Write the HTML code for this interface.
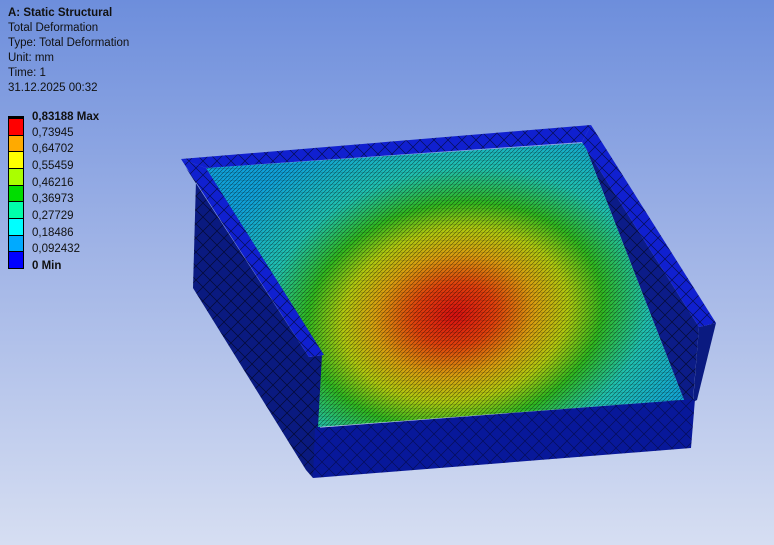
<!DOCTYPE html>
<html><head><meta charset="utf-8"><style>
html,body{margin:0;padding:0;width:774px;height:545px;overflow:hidden}
body{background:linear-gradient(180deg,#6d8edc 0%,#9fb3e6 45%,#d6def2 100%);font-family:"Liberation Sans",sans-serif;position:relative}
.t{position:absolute;left:8px;font-size:11.5px;color:#111;line-height:15px}
.leg{position:absolute;left:8px;top:116px;width:16px;height:153px;border:1px solid #000;display:flex;flex-direction:column;box-sizing:border-box}
.leg div{flex:1;border-bottom:1px solid #000}
.lb{position:absolute;left:32px;font-size:11.5px;color:#111}
</style></head><body>
<svg width="774" height="545" style="position:absolute;left:0;top:0">
<defs>
<radialGradient id="g" cx="455" cy="315" r="270" gradientUnits="userSpaceOnUse" gradientTransform="translate(455 315) rotate(-10) scale(1 0.75) translate(-455 -315)">
<stop offset="0" stop-color="#d81010"/><stop offset="0.15" stop-color="#e0400c"/>
<stop offset="0.3" stop-color="#d8a010"/><stop offset="0.42" stop-color="#b0c810"/>
<stop offset="0.55" stop-color="#30b820"/><stop offset="0.72" stop-color="#20c0b0"/>
<stop offset="1" stop-color="#10a0d8"/></radialGradient>
<pattern id="m" width="4" height="4" patternUnits="userSpaceOnUse"><path d="M0 4L4 0M0 0H4" stroke="#000" stroke-width="0.6" opacity="0.55"/></pattern>
<pattern id="m2" width="14" height="14" patternUnits="userSpaceOnUse"><path d="M0 14L14 0M0 0L14 14" stroke="#000" stroke-width="0.7" opacity="0.6"/></pattern>
</defs>
<!-- left outer wall -->
<polygon points="186,168 309,357 324,355 320,430 313,478 306,470 193,288 196,180" fill="#0a1a80"/>
<polygon points="186,168 309,357 324,355 320,430 313,478 306,470 193,288 196,180" fill="url(#m2)"/>
<!-- right outer wall -->
<polygon points="699,327 716,323 697,400 693,402" fill="#0a1a80"/>
<!-- inner right wall -->
<polygon points="582,142 699,327 693,400 684,400 584,143" fill="#0c1c88"/>
<polygon points="582,142 699,327 693,400 684,400 584,143" fill="url(#m2)"/>
<!-- floor -->
<polygon points="206,168 584,143 684,400 318,427 322,355" fill="url(#g)"/>
<polygon points="206,168 584,143 684,400 318,427 322,355" fill="url(#m)"/>
<!-- front wall -->
<polygon points="315,428 695,399 691,448 313,478" fill="#08189a"/>
<polygon points="315,428 695,399 691,448 313,478" fill="url(#m2)" opacity="0.7"/>
<!-- rim -->
<polygon points="181,159 591,125 582,142 206,168" fill="#1020d0"/>
<polygon points="181,159 206,168 324,355 309,357" fill="#1020d0"/>
<polygon points="591,125 716,323 699,327 582,142" fill="#1020d0"/>
<polygon points="181,159 591,125 582,142 206,168" fill="url(#m2)"/>
<polygon points="181,159 206,168 324,355 309,357" fill="url(#m2)"/>
<polygon points="591,125 716,323 699,327 582,142" fill="url(#m2)"/>
</svg>
<div class="t" style="top:6px;font-weight:bold">A: Static Structural</div>
<div class="t" style="top:21px">Total Deformation</div>
<div class="t" style="top:36px">Type: Total Deformation</div>
<div class="t" style="top:51px">Unit: mm</div>
<div class="t" style="top:66px">Time: 1</div>
<div class="t" style="top:81px">31.12.2025 00:32</div>
<div class="leg">
<div style="background:#000;flex:0 0 2px;border:0"></div>
<div style="background:#ff0000"></div><div style="background:#ffaa00"></div><div style="background:#ffff00"></div><div style="background:#aaff00"></div><div style="background:#00dd00"></div><div style="background:#00ffaa"></div><div style="background:#00ffff"></div><div style="background:#00aaff"></div><div style="background:#0000ff;border:0"></div>
</div>
<div class="lb" style="top:111px;font-weight:bold">0,83188 Max</div>
<div class="lb" style="top:127px">0,73945</div>
<div class="lb" style="top:143px">0,64702</div>
<div class="lb" style="top:160px">0,55459</div>
<div class="lb" style="top:177px">0,46216</div>
<div class="lb" style="top:193px">0,36973</div>
<div class="lb" style="top:210px">0,27729</div>
<div class="lb" style="top:227px">0,18486</div>
<div class="lb" style="top:243px">0,092432</div>
<div class="lb" style="top:260px;font-weight:bold">0 Min</div>
</body></html>
